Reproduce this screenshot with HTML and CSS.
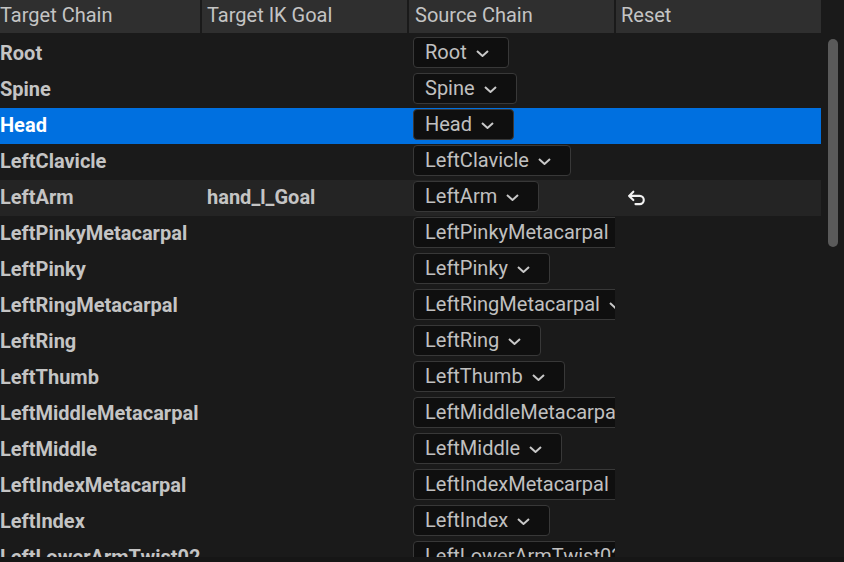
FILE: index.html
```html
<!DOCTYPE html>
<html>
<head>
<meta charset="utf-8">
<link rel="stylesheet" href="styles.css">
</head>
<body>
<div class="panel">
  <div class="table">
    <div class="header">
      <div class="hcell c1">Target Chain</div>
      <div class="hcell c2">Target IK Goal</div>
      <div class="hcell c3">Source Chain</div>
      <div class="hcell c4">Reset</div>
    </div>
    <div class="rows">
      <div class="row"><div class="cell c1 label">Root</div><div class="cell c2"></div><div class="cell c3"><div class="combo"><span>Root</span><svg class="chev" viewBox="0 0 13 7"><path d="M1 1 L6.5 6 L12 1"/></svg></div></div><div class="cell c4"></div></div>
      <div class="row"><div class="cell c1 label">Spine</div><div class="cell c2"></div><div class="cell c3"><div class="combo"><span>Spine</span><svg class="chev" viewBox="0 0 13 7"><path d="M1 1 L6.5 6 L12 1"/></svg></div></div><div class="cell c4"></div></div>
      <div class="row selected"><div class="cell c1 label">Head</div><div class="cell c2"></div><div class="cell c3"><div class="combo"><span>Head</span><svg class="chev" viewBox="0 0 13 7"><path d="M1 1 L6.5 6 L12 1"/></svg></div></div><div class="cell c4"></div></div>
      <div class="row"><div class="cell c1 label">LeftClavicle</div><div class="cell c2"></div><div class="cell c3"><div class="combo"><span>LeftClavicle</span><svg class="chev" viewBox="0 0 13 7"><path d="M1 1 L6.5 6 L12 1"/></svg></div></div><div class="cell c4"></div></div>
      <div class="row hover"><div class="cell c1 label">LeftArm</div><div class="cell c2 label">hand_l_Goal</div><div class="cell c3"><div class="combo"><span>LeftArm</span><svg class="chev" viewBox="0 0 13 7"><path d="M1 1 L6.5 6 L12 1"/></svg></div></div><div class="cell c4"><svg class="reset" viewBox="0 0 18 15"><path d="M6 1.5 L2 5.5 L6 9.5 M2 5.5 H12 A3.9 3.9 0 0 1 12 13.3 H8"/></svg></div></div>
      <div class="row"><div class="cell c1 label">LeftPinkyMetacarpal</div><div class="cell c2"></div><div class="cell c3"><div class="combo"><span>LeftPinkyMetacarpal</span><svg class="chev" viewBox="0 0 13 7"><path d="M1 1 L6.5 6 L12 1"/></svg></div></div><div class="cell c4"></div></div>
      <div class="row"><div class="cell c1 label">LeftPinky</div><div class="cell c2"></div><div class="cell c3"><div class="combo"><span>LeftPinky</span><svg class="chev" viewBox="0 0 13 7"><path d="M1 1 L6.5 6 L12 1"/></svg></div></div><div class="cell c4"></div></div>
      <div class="row"><div class="cell c1 label">LeftRingMetacarpal</div><div class="cell c2"></div><div class="cell c3"><div class="combo"><span>LeftRingMetacarpal</span><svg class="chev" viewBox="0 0 13 7"><path d="M1 1 L6.5 6 L12 1"/></svg></div></div><div class="cell c4"></div></div>
      <div class="row"><div class="cell c1 label">LeftRing</div><div class="cell c2"></div><div class="cell c3"><div class="combo"><span>LeftRing</span><svg class="chev" viewBox="0 0 13 7"><path d="M1 1 L6.5 6 L12 1"/></svg></div></div><div class="cell c4"></div></div>
      <div class="row"><div class="cell c1 label">LeftThumb</div><div class="cell c2"></div><div class="cell c3"><div class="combo"><span>LeftThumb</span><svg class="chev" viewBox="0 0 13 7"><path d="M1 1 L6.5 6 L12 1"/></svg></div></div><div class="cell c4"></div></div>
      <div class="row"><div class="cell c1 label">LeftMiddleMetacarpal</div><div class="cell c2"></div><div class="cell c3"><div class="combo"><span>LeftMiddleMetacarpal</span><svg class="chev" viewBox="0 0 13 7"><path d="M1 1 L6.5 6 L12 1"/></svg></div></div><div class="cell c4"></div></div>
      <div class="row"><div class="cell c1 label">LeftMiddle</div><div class="cell c2"></div><div class="cell c3"><div class="combo"><span>LeftMiddle</span><svg class="chev" viewBox="0 0 13 7"><path d="M1 1 L6.5 6 L12 1"/></svg></div></div><div class="cell c4"></div></div>
      <div class="row"><div class="cell c1 label">LeftIndexMetacarpal</div><div class="cell c2"></div><div class="cell c3"><div class="combo"><span>LeftIndexMetacarpal</span><svg class="chev" viewBox="0 0 13 7"><path d="M1 1 L6.5 6 L12 1"/></svg></div></div><div class="cell c4"></div></div>
      <div class="row"><div class="cell c1 label">LeftIndex</div><div class="cell c2"></div><div class="cell c3"><div class="combo"><span>LeftIndex</span><svg class="chev" viewBox="0 0 13 7"><path d="M1 1 L6.5 6 L12 1"/></svg></div></div><div class="cell c4"></div></div>
      <div class="row"><div class="cell c1 label">LeftLowerArmTwist02</div><div class="cell c2"></div><div class="cell c3"><div class="combo"><span>LeftLowerArmTwist02</span><svg class="chev" viewBox="0 0 13 7"><path d="M1 1 L6.5 6 L12 1"/></svg></div></div><div class="cell c4"></div></div>
    </div>
  </div>
  <div class="scrolltrack"><div class="thumb"></div></div>
</div>
<div class="footer"></div>
</body>
</html>
```
FILE: styles.css
```css
html, body {
  margin: 0;
  padding: 0;
  background: #1a1a1a;
  width: 844px;
  height: 562px;
  overflow: hidden;
  font-family: Roboto, "Liberation Sans", sans-serif;
  font-size: 20px;
  color: #c0c0c0;
}
.panel {
  display: flex;
  height: 557px;
  overflow: hidden;
}
.table {
  width: 821px;
  flex-shrink: 0;
}
.header {
  display: grid;
  grid-template-columns: 202px 207px 207px 205px;
  height: 33px;
  background: #2f2f2f;
  margin-bottom: 3px;
}
.hcell {
  display: flex;
  align-items: center;
  line-height: 1;
  color: #c4c4c4;
  white-space: nowrap;
  overflow: hidden;
  padding-bottom: 4px;
}
.hcell.c1, .hcell.c2, .hcell.c3 {
  border-right: 2px solid #1a1a1a;
}
.hcell.c1 { padding-left: 0; }
.hcell.c2 { padding-left: 5px; }
.hcell.c3 { padding-left: 6px; }
.hcell.c4 { padding-left: 5px; }

.row {
  display: grid;
  grid-template-columns: 202px 207px 206px 206px;
  height: 36px;
}
.row.hover { background: #242424; }
.row.selected { background: #0070e0; }
.cell {
  display: flex;
  align-items: center;
  white-space: nowrap;
  overflow: hidden;
}
.label {
  font-weight: 700;
  color: #c4c4c4;
  padding-bottom: 3px;
}
.row.selected .label { color: #ffffff; }
.cell.c2 { padding-left: 5px; }
.cell.c3 { padding-left: 4px; align-items: flex-start; padding-top: 1px; }
.cell.c4 { padding-left: 12px; }

.combo {
  flex-shrink: 0;
  box-sizing: border-box;
  height: 31px;
  display: flex;
  align-items: center;
  gap: 9px;
  padding: 0 19px 1px 11px;
  background: #0f0f0f;
  border: 1px solid #383838;
  border-radius: 4px;
  color: #c0c0c0;
}
.chev {
  width: 13px;
  height: 7px;
  fill: none;
  stroke: #c8c8c8;
  stroke-width: 2;
  margin-top: 2px;
}
.reset {
  width: 19px;
  height: 16px;
  fill: none;
  stroke: #f2f2f2;
  stroke-width: 2;
  stroke-linecap: round;
  stroke-linejoin: round;
}
.scrolltrack {
  flex: 1;
  padding-top: 39px;
  padding-left: 7px;
}
.thumb {
  width: 10px;
  height: 208px;
  background: #5a5a5a;
  border-radius: 5px;
}
.footer {
  height: 5px;
  background: #161616;
}
```
